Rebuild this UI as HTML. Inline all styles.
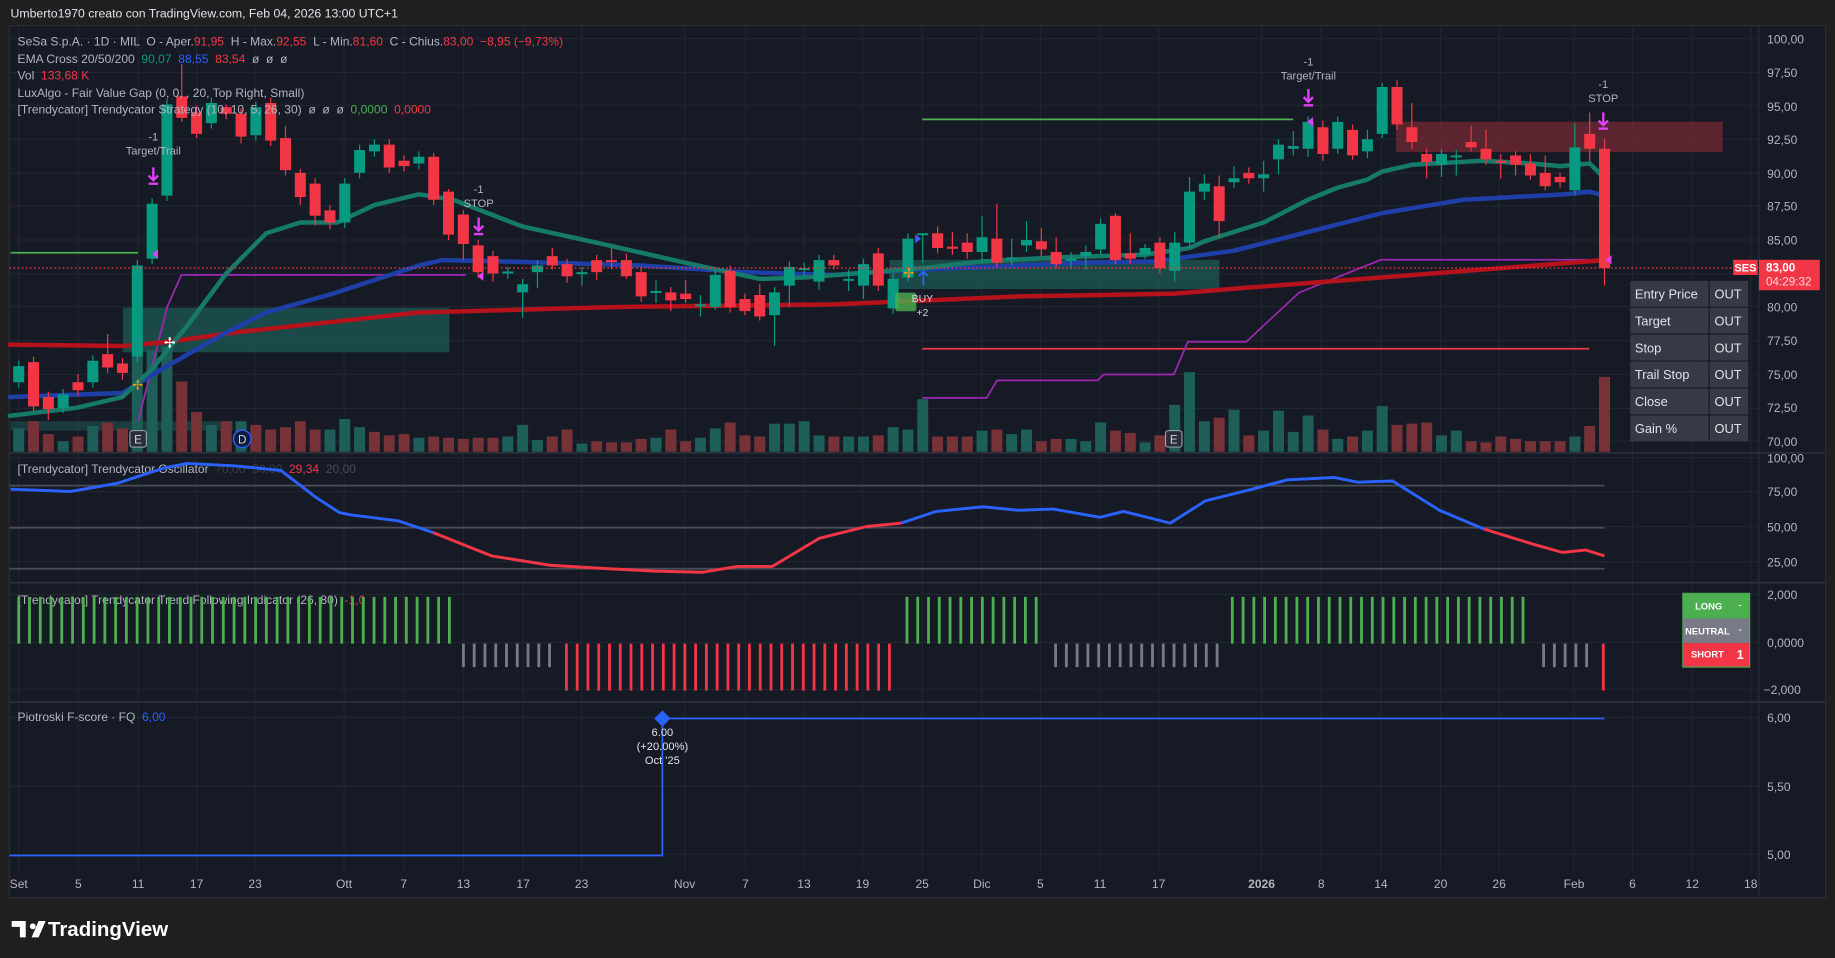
<!DOCTYPE html>
<html><head><meta charset="utf-8">
<style>
html,body{margin:0;padding:0;background:#1f1f1f;overflow:hidden}
svg{display:block}
text{font-family:"Liberation Sans",sans-serif;white-space:pre}
</style></head>
<body>
<svg width="1835" height="958" viewBox="0 0 1568 818.6" preserveAspectRatio="none" xmlns="http://www.w3.org/2000/svg">
<rect x="0" y="0" width="1568" height="819" fill="#1f1f1f"/>
<text x="9" y="15" font-size="10.5" fill="#e0e3eb">Umberto1970 creato con TradingView.com, Feb 04, 2026 13:00 UTC+1</text>
<rect x="8" y="22" width="1552" height="745" fill="#161a25" stroke="#2a2e39" stroke-width="1"/>
<!-- grid -->
<g stroke="#212531" stroke-width="1">
<path d="M8 33H1503M8 62H1503M8 90H1503M8 119H1503M8 148H1503M8 176H1503M8 205H1503M8 234H1503M8 262H1503M8 291H1503M8 320H1503M8 349H1503M8 377H1503M8 391H1503M8 420H1503M8 450H1503M8 480H1503M8 508H1503M8 549H1503M8 589H1503M8 613H1503M8 672H1503M8 730H1503"/>
<path d="M16 22V745M67 22V745M118 22V745M168 22V745M218 22V745M294 22V745M345 22V745M396 22V745M447 22V745M497 22V745M585 22V745M637 22V745M687 22V745M737 22V745M788 22V745M839 22V745M889 22V745M940 22V745M990 22V745M1078 22V745M1129 22V745M1180 22V745M1231 22V745M1281 22V745M1345 22V745M1395 22V745M1446 22V745M1496 22V745"/>
</g>
<line x1="1503" y1="22" x2="1503" y2="767" stroke="#2a2e39"/>
<g stroke="#2a2e39" stroke-width="1.5">
<line x1="8" y1="387" x2="1560" y2="387"/><line x1="8" y1="498" x2="1560" y2="498"/><line x1="8" y1="600" x2="1560" y2="600"/>
</g>
<!-- FVG boxes -->
<rect x="105" y="263" width="279" height="38" fill="#1e5e57" opacity="0.7"/>
<rect x="760" y="222" width="282" height="25" fill="#1e5e57" opacity="0.7"/>
<rect x="1193" y="104" width="279" height="26" fill="#7a2a33" opacity="0.7"/>
<rect x="9" y="360" width="190" height="8" fill="#1e5e57" opacity="0.5"/>
<!-- volume -->
<g transform="matrix(12.664 0 0 1 16 0)" fill="none" stroke-width="11">
<path vector-effect="non-scaling-stroke" stroke="#1d5e58" d="M0 386V366M3 386V377M5 386V364M8 386V305M9 386V299M10 386V296M13 386V363M15 386V360M21 386V367M22 386V358M23 386V365M27 386V374M33 386V373M34 386V363M35 386V376M38 386V379M43 386V374M46 386V374M47 386V366M51 386V362M52 386V362M53 386V360M54 386V372M56 386V373M57 386V373M59 386V365M60 386V367M61 386V341M65 386V368M67 386V371M68 386V367M71 386V375M72 386V377M73 386V361M76 386V378M78 386V346M79 386V318M80 386V360M82 386V350M84 386V368M85 386V351M86 386V369M87 386V355M89 386V375M91 386V368M92 386V347M96 386V372M97 386V368M105 386V373"/>
<path vector-effect="non-scaling-stroke" stroke="#773238" d="M1 386V360M2 386V371M4 386V373M6 386V361M7 386V366M11 386V326M12 386V352M14 386V360M16 386V363M17 386V367M18 386V365M19 386V360M20 386V367M24 386V369M25 386V372M26 386V371M28 386V373M29 386V374M30 386V375M31 386V374M32 386V374M36 386V373M37 386V367M39 386V377M40 386V378M41 386V378M42 386V375M44 386V367M45 386V377M48 386V361M49 386V372M50 386V373M55 386V373M58 386V372M62 386V373M63 386V373M64 386V373M66 386V367M69 386V377M70 386V375M74 386V368M75 386V370M77 386V372M81 386V357M83 386V372M88 386V367M90 386V373M93 386V363M94 386V362M95 386V361M98 386V377M99 386V378M100 386V373M101 386V375M102 386V377M103 386V377M104 386V377M106 386V364M107 386V322"/>
</g>
<!-- strategy lines -->
<line x1="9" y1="216" x2="118" y2="216" stroke="#4caf50" stroke-width="1.5"/>
<line x1="788" y1="102" x2="1105" y2="102" stroke="#4caf50" stroke-width="1.5"/>
<line x1="788" y1="298" x2="1358" y2="298" stroke="#f23645" stroke-width="1.5"/>
<polyline points="118,360 143,262 155,235 398,235" fill="none" stroke="#9c27b0" stroke-width="1.5"/>
<polyline points="788,340 843,340 852,325 938,325 943,320 1003,320 1015,292 1065,292 1110,250 1180,222 1370,222" fill="none" stroke="#9c27b0" stroke-width="1.5"/>
<!-- EMAs -->
<g transform="matrix(12.664 0 0 -11.47 16 1180)" fill="none" stroke-linejoin="round" stroke-linecap="round">
<polyline vector-effect="non-scaling-stroke" stroke="#b5121b" stroke-width="4.5" points="-0.6,77.2 7,77.1 10,77.4 14.5,78.1 27,79.6 40,80 55,80.2 67.6,80.8 78,81 82.4,81.4 93,82.3 107,83.5"/>
<polyline vector-effect="non-scaling-stroke" stroke="#1f3fa8" stroke-width="4.5" points="-0.6,73.3 7,73.6 10,75.6 14,78.1 16.7,79.6 21.2,81 27,83.1 28.6,83.5 33,83.4 42,83.1 49,82.6 55,82.4 61,82.8 72,83.3 76.6,83.4 82,84.2 87,85.6 92,87 97.5,88 104.3,88.4 106,88.6 107,88.3"/>
<polyline vector-effect="non-scaling-stroke" stroke="#167a68" stroke-width="4.5" points="-0.6,71.9 3.9,72.5 7,73.3 9,75.4 11.3,78.5 14,82.5 16.7,85.5 19,86.3 21.5,86.3 24,87.6 27,88.4 29.3,88 34,86 39,84.8 45,83.3 50,82.1 53,82.2 61,82.9 65,83.4 70,83.7 76,83.9 79,84.4 80,84.9 82,85.6 84,86.3 87,88 89,88.9 91,89.5 92,90.1 94,90.6 98.7,90.9 102,90.7 104,90.5 106,90.7 107,89.6"/>
</g>
<!-- candles -->
<g transform="matrix(12.664 0 0 -11.47 16 1180)" fill="none">
<path vector-effect="non-scaling-stroke" stroke="#089981" stroke-width="1.2" d="M0 74V76M3 72.1V73.9M5 74V76.4M8 75.9V83.5M9 83.2V88.1M10 87.9V95.5M13 93.3V95.6M16 92.4V95.3M22 85.9V89.6M23 89.6V92.1M24 91.2V92.5M27 90.3V91.6M33 82.1V83M34 79.2V82.1M35 81.4V83.5M38 81.6V83M43 80.3V82M46 79.3V80.9M47 79.8V82.8M51 77.1V81.5M52 80V83.4M53 82.3V83.3M54 81.3V83.9M56 81.2V82.8M57 80.6V83.6M59 79.5V82.5M60 81.9V85.5M61 83.3V85.5M65 83.3V86.8M67 83.1V85.1M68 84.1V86.4M71 82.9V84.1M72 82.8V84.6M73 83.9V86.6M76 83.6V84.7M78 81.9V85.6M79 84.4V89.7M80 88V89.9M82 88.9V90.5M84 88.6V90.9M85 89.9V92.5M86 91.3V93.1M87 91.2V94.2M89 91.4V94.2M91 91.1V93.2M92 92.6V96.7M96 89.7V91.8M97 89.8V91.7M105 88.3V93.7"/>
<path vector-effect="non-scaling-stroke" stroke="#089981" stroke-width="11" d="M0 74.4V75.6M3 72.5V73.5M5 74.4V76M8 76.3V83.1M9 83.6V87.7M10 88.3V95.1M13 93.7V95.2M16 92.8V94.9M22 86.3V89.2M23 90V91.7M24 91.6V92.1M27 90.7V91.2M33 82.5V82.65M34 81.1V81.7M35 82.6V83.1M38 82.45V82.6M43 81.05V81.2M46 80.05V80.2M47 80V82.4M51 79.4V81.1M52 81.6V83M53 82.75V82.9M54 81.9V83.5M56 81.95V82.1M57 81.6V83.2M59 79.9V82.1M60 82.2V85.1M61 85.35V85.5M65 84.1V85.2M67 83.55V83.7M68 84.6V85M71 83.45V83.6M72 83.8V84.1M73 84.3V86.2M76 83.9V84.4M78 82.7V84.8M79 84.8V88.6M80 88.6V89.2M82 89.3V89.6M84 89.6V89.9M85 91V92.1M86 91.8V92M87 91.8V93.8M89 91.8V93.8M91 91.6V92.5M92 92.9V96.4M96 90.6V91.4M97 91.15V91.3M105 88.7V91.9"/>
<path vector-effect="non-scaling-stroke" stroke="#f23645" stroke-width="1.2" d="M1 72.2V76.3M2 71.6V73.7M4 73.4V75M6 75.1V78M7 74.6V76.2M11 93.8V98.1M12 92.6V95M14 94V95.1M15 92.2V94.8M17 92V95.6M18 89.8V93.5M19 87.6V90.3M20 86.1V89.6M21 85.8V87.6M25 90V92.5M26 90.1V91.3M28 87.6V91.5M29 85V88.8M30 83.5V87.2M31 82.2V85M32 81.9V84.2M36 82.8V84.4M37 81.8V83.6M39 82V83.9M40 82.8V84.4M41 82.1V84M42 80.4V83M44 79.7V81.5M45 80.3V82M48 79.6V83.1M49 79.4V81M50 79V81.7M55 82.8V83.9M58 81.2V84.4M62 84V86M63 83.9V85.6M64 83.6V85.5M66 83V87.7M69 83.8V85.9M70 82.9V85.2M74 83.2V87M75 83.2V85.5M77 82.5V85.2M81 85.2V89.8M83 89.2V90.4M88 90.9V93.9M90 91V93.6M93 93.2V96.9M94 91.8V95.2M95 89.6V91.8M98 91.6V93.5M99 90.6V93.2M100 89.6V91.4M101 89.8V91.6M102 89.5V91.4M103 88.7V91.3M104 88.9V90M106 90.8V94.5M107 81.6V92.55"/>
<path vector-effect="non-scaling-stroke" stroke="#f23645" stroke-width="11" d="M1 72.6V75.9M2 72.4V73.3M4 73.8V74.4M6 75.5V76.5M7 75.1V75.8M11 94.1V95.7M12 92.9V94.5M14 94.4V94.9M15 92.7V94.4M17 92.4V95.2M18 90.2V92.6M19 88.2V90M20 86.8V89.2M21 86.3V87.2M25 90.4V92.1M26 90.5V90.9M28 88V91.2M29 85.4V88.6M30 84.7V86.9M31 82.6V84.6M32 82.5V83.8M36 83.1V83.8M37 82.3V83.2M39 82.6V83.5M40 83.35V83.5M41 82.3V83.5M42 80.8V82.6M44 80.5V81.1M45 80.6V81M48 80V82.7M49 79.7V80.6M50 79.3V80.9M55 83.1V83.5M58 81.6V84M62 84.4V85.5M63 84.35V84.5M64 84.1V84.8M66 83.3V85.1M69 84.3V84.9M70 83.2V84.1M74 83.5V86.8M75 83.6V84M77 82.9V84.8M81 86.4V89M83 89.6V90M88 91.4V93.4M90 91.3V93.2M93 93.6V96.4M94 92.3V93.4M95 90.8V91.4M98 91.9V92.3M99 91V91.8M100 90.75V90.9M101 90.6V91.3M102 89.8V90.7M103 89V90M104 89.3V89.7M106 91.8V92.9M107 82.9V91.8"/>
</g>
<line x1="8" y1="229" x2="1503" y2="229" stroke="#f23645" stroke-width="1" stroke-dasharray="1.5,2"/>
<!-- annotations -->
<g font-size="9.5" fill="#b2b5be" text-anchor="middle">
<text x="131" y="120">-1</text><text x="131" y="132">Target/Trail</text>
<text x="409" y="165">-1</text><text x="409" y="177">STOP</text>
<text x="1118" y="56">-1</text><text x="1118" y="68">Target/Trail</text>
<text x="1370" y="75">-1</text><text x="1370" y="87">STOP</text>
</g>
<g stroke="#e040fb" stroke-width="2" fill="none">
<path d="M131 143v11M127 150l4 4 4-4M127 157h8"/>
<path d="M409 186v11M405 193l4 4 4-4M405 200h8"/>
<path d="M1118 76v11M1114 83l4 4 4-4M1114 90h8"/>
<path d="M1370 96v11M1366 103l4 4 4-4M1366 110h8"/>
</g>
<path d="M135 213l-5 4 5 4z" fill="#e040fb"/><path d="M413 232l-5 4 5 4z" fill="#e040fb"/>
<path d="M1122 100l-5 4 5 4z" fill="#e040fb"/><path d="M1377 218l-5 4 5 4z" fill="#e040fb"/>
<path d="M789 232v12M785 236l4-4 4 4" stroke="#2962ff" stroke-width="1.5" fill="none"/>
<path d="M782 200l5 4-5 4z" fill="#2962ff"/>
<rect x="765" y="250" width="18" height="16" rx="2" fill="#4caf50" opacity="0.8"/>
<text x="779" y="258" font-size="9" fill="#d1d4dc">BUY</text><text x="783" y="270" font-size="9" fill="#d1d4dc">+2</text>
<text x="140" y="297" font-size="12" fill="#fff">✢</text><text x="113" y="333" font-size="11" fill="#ff9800">✢</text><text x="772" y="237" font-size="11" fill="#ff9800">✢</text>
<rect x="111" y="368" width="14" height="14" rx="2" fill="#2a2e39" stroke="#b2b5be" stroke-width="0.8"/><text x="118" y="379" font-size="10" fill="#d1d4dc" text-anchor="middle">E</text>
<rect x="996" y="368" width="14" height="14" rx="2" fill="#2a2e39" stroke="#b2b5be" stroke-width="0.8"/><text x="1003" y="379" font-size="10" fill="#d1d4dc" text-anchor="middle">E</text>
<circle cx="207" cy="375" r="7.5" fill="#0d1b3e" stroke="#2962ff" stroke-width="1.2"/><text x="207" y="379" font-size="10" fill="#d1d4dc" text-anchor="middle">D</text>
<!-- legends -->
<g font-size="10.3" fill="#b2b5be">
<text x="15" y="39">SeSa S.p.A. · 1D · MIL  O - Aper.<tspan fill="#f23645">91,95</tspan>  H - Max.<tspan fill="#f23645">92,55</tspan>  L - Min.<tspan fill="#f23645">81,60</tspan>  C - Chius.<tspan fill="#f23645">83,00  −8,95 (−9,73%)</tspan></text>
<text x="15" y="54">EMA Cross 20/50/200  <tspan fill="#089981">90,07</tspan>  <tspan fill="#2962ff">88,55</tspan>  <tspan fill="#f23645">83,54</tspan>  ø  ø  ø</text>
<text x="15" y="68">Vol  <tspan fill="#f23645">133,68 K</tspan></text>
<text x="15" y="83">LuxAlgo - Fair Value Gap (0, 0, , 20, Top Right, Small)</text>
<text x="15" y="97">[Trendycator] Trendycator Strategy (10, 10, 5, 26, 30)  ø  ø  ø  <tspan fill="#4caf50">0,0000</tspan>  <tspan fill="#f23645">0,0000</tspan></text>
<text x="15" y="404">[Trendycator] Trendycator Oscillator  <tspan fill="#3a3e49">70,00  50,00</tspan>  <tspan fill="#f23645">29,34</tspan>  <tspan fill="#4a4e59">20,00</tspan></text>
<text x="15" y="516">[Trendycator] Trendycator Trend Following Indicator (26, 80)  <tspan fill="#f23645">-1,0</tspan></text>
<text x="15" y="616">Piotroski F-score · FQ  <tspan fill="#2962ff">6,00</tspan></text>
</g>
<!-- oscillator -->
<g stroke="#4a4e59" stroke-width="1.5"><line x1="8" y1="415" x2="1371" y2="415"/><line x1="8" y1="451" x2="1371" y2="451"/><line x1="8" y1="486" x2="1371" y2="486"/></g>
<polyline fill="none" stroke="#2962ff" stroke-width="2.5" stroke-linejoin="round" points="9,418 60,420 100,413 140,400 160,396 200,398 240,402 270,425 290,438 300,440 340,445 370,455"/>
<polyline fill="none" stroke="#f23645" stroke-width="2.5" stroke-linejoin="round" points="370,455 420,475 470,483 520,486 560,488 600,489 630,484 660,484 700,460 740,450 770,447"/>
<polyline fill="none" stroke="#2962ff" stroke-width="2.5" stroke-linejoin="round" points="770,447 800,437 840,433 870,436 900,435 940,442 960,437 1000,447 1030,428 1070,418 1100,410 1140,408 1160,412 1190,411 1230,436 1268,452"/>
<polyline fill="none" stroke="#f23645" stroke-width="2.5" stroke-linejoin="round" points="1268,452 1310,465 1335,472 1355,470 1371,475"/>
<!-- trend bars -->
<g fill="none" stroke-dasharray="2.4 6.8">
<line x1="14.8" y1="530" x2="386" y2="530" stroke="#4caf50" stroke-width="40"/>
<line x1="394.8" y1="560" x2="472" y2="560" stroke="#787b86" stroke-width="20"/>
<line x1="482.8" y1="570" x2="765" y2="570" stroke="#f23645" stroke-width="40"/>
<line x1="773.8" y1="530" x2="892" y2="530" stroke="#4caf50" stroke-width="40"/>
<line x1="900.8" y1="560" x2="1044" y2="560" stroke="#787b86" stroke-width="20"/>
<line x1="1051.8" y1="530" x2="1309" y2="530" stroke="#4caf50" stroke-width="40"/>
<line x1="1317.8" y1="560" x2="1360" y2="560" stroke="#787b86" stroke-width="20"/>
</g>
<rect x="1368.8" y="550" width="2.4" height="40" fill="#f23645"/>
<!-- piotroski -->
<polyline fill="none" stroke="#2962ff" stroke-width="1.5" points="8,731 566,731 566,614 1371,614"/>
<path d="M566 607l7 7-7 7-7-7z" fill="#2962ff"/>
<g font-size="9.5" fill="#e0e3eb" text-anchor="middle"><text x="566" y="629">6.00</text><text x="566" y="641">(+20.00%)</text><text x="566" y="653">Oct '25</text></g>
<!-- axes -->
<g font-size="10.3" fill="#b2b5be">
<text x="1510" y="37">100,00</text><text x="1510" y="66">97,50</text><text x="1510" y="95">95,00</text><text x="1510" y="123">92,50</text><text x="1510" y="152">90,00</text><text x="1510" y="180">87,50</text><text x="1510" y="209">85,00</text><text x="1510" y="266">80,00</text><text x="1510" y="295">77,50</text><text x="1510" y="324">75,00</text><text x="1510" y="352">72,50</text><text x="1510" y="381">70,00</text>
<text x="1510" y="395">100,00</text><text x="1510" y="424">75,00</text><text x="1510" y="454">50,00</text><text x="1510" y="484">25,00</text>
<text x="1510" y="512">2,000</text><text x="1510" y="553">0,0000</text><text x="1507" y="593">−2,000</text>
<text x="1510" y="617">6,00</text><text x="1510" y="676">5,50</text><text x="1510" y="734">5,00</text>
</g>
<g font-size="10.3" fill="#b2b5be" text-anchor="middle">
<text x="16" y="759">Set</text><text x="67" y="759">5</text><text x="118" y="759">11</text><text x="168" y="759">17</text><text x="218" y="759">23</text><text x="294" y="759">Ott</text><text x="345" y="759">7</text><text x="396" y="759">13</text><text x="447" y="759">17</text><text x="497" y="759">23</text><text x="585" y="759">Nov</text><text x="637" y="759">7</text><text x="687" y="759">13</text><text x="737" y="759">19</text><text x="788" y="759">25</text><text x="839" y="759">Dic</text><text x="889" y="759">5</text><text x="940" y="759">11</text><text x="990" y="759">17</text><text x="1078" y="759" font-weight="bold">2026</text><text x="1129" y="759">8</text><text x="1180" y="759">14</text><text x="1231" y="759">20</text><text x="1281" y="759">26</text><text x="1345" y="759">Feb</text><text x="1395" y="759">6</text><text x="1446" y="759">12</text><text x="1496" y="759">18</text>
</g>
<!-- price label -->
<rect x="1481" y="222" width="21" height="13" fill="#f23645"/><text x="1491.5" y="232" font-size="9.5" font-weight="bold" fill="#fff" text-anchor="middle">SES</text>
<rect x="1503" y="222" width="52" height="26" fill="#f23645"/><text x="1509" y="232" font-size="10" font-weight="bold" fill="#fff">83,00</text><text x="1509" y="244" font-size="10" fill="#ffd6da">04:29:32</text>
<!-- table -->
<g fill="#363a45">
<rect x="1393" y="240" width="67" height="22"/><rect x="1461" y="240" width="33" height="22"/>
<rect x="1393" y="263" width="67" height="22"/><rect x="1461" y="263" width="33" height="22"/>
<rect x="1393" y="286" width="67" height="22"/><rect x="1461" y="286" width="33" height="22"/>
<rect x="1393" y="309" width="67" height="22"/><rect x="1461" y="309" width="33" height="22"/>
<rect x="1393" y="332" width="67" height="22"/><rect x="1461" y="332" width="33" height="22"/>
<rect x="1393" y="355" width="67" height="22"/><rect x="1461" y="355" width="33" height="22"/>
</g>
<g font-size="11" fill="#e0e3eb">
<text x="1397" y="255">Entry Price</text><text x="1465" y="255">OUT</text>
<text x="1397" y="278">Target</text><text x="1465" y="278">OUT</text>
<text x="1397" y="301">Stop</text><text x="1465" y="301">OUT</text>
<text x="1397" y="324">Trail Stop</text><text x="1465" y="324">OUT</text>
<text x="1397" y="347">Close</text><text x="1465" y="347">OUT</text>
<text x="1397" y="370">Gain %</text><text x="1465" y="370">OUT</text>
</g>
<!-- trend legend -->
<rect x="1438" y="507" width="57" height="63" fill="none" stroke="#4caf50"/>
<rect x="1438.5" y="507.5" width="56" height="21" fill="#4caf50"/>
<rect x="1438.5" y="528.5" width="56" height="21" fill="#787b86"/>
<rect x="1438.5" y="549.5" width="56" height="20" fill="#f23645"/>
<g font-size="8" font-weight="bold" fill="#fff" text-anchor="middle"><text x="1460" y="521">LONG</text><text x="1459" y="542">NEUTRAL</text><text x="1459" y="562">SHORT</text></g>
<g font-size="9" fill="#fff" text-anchor="middle"><text x="1487" y="520">-</text><text x="1487" y="541">-</text><text x="1487" y="563" font-size="11" font-weight="bold">1</text></g>
<!-- logo -->
<path d="M10 787h12v14h-5v-9h-7z M28 789a2.5 2.5 0 1 0 0.01 0z M33 787h6l-6 14h-6z" fill="#fff"/>
<text x="41" y="800" font-size="17.5" font-weight="bold" fill="#fff">TradingView</text>
</svg>
</body></html>
